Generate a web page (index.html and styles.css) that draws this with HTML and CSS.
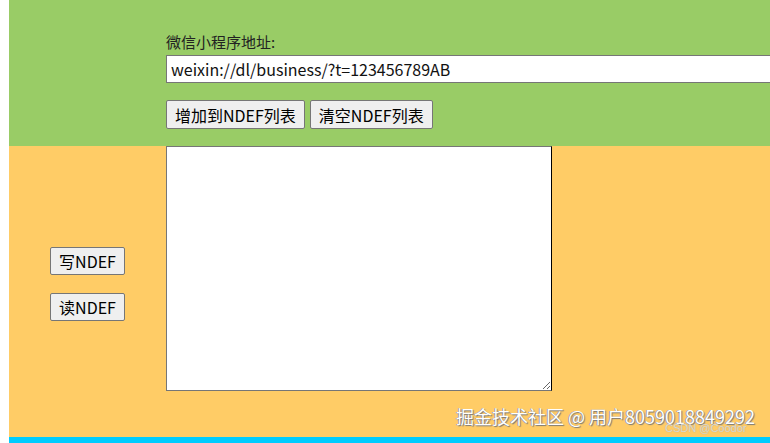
FILE: index.html
```html
<!DOCTYPE html>
<html lang="zh">
<head>
<meta charset="utf-8">
<link rel="stylesheet" href="styles.css">
</head>
<body>
<div class="page">
  <section class="top">
    <div class="side"></div>
    <div class="content">
      <div class="label">微信小程序地址:</div>
      <input class="url" type="text" value="weixin://dl/business/?t=123456789AB">
      <div class="actions">
        <button class="btn">增加到NDEF列表</button>
        <button class="btn">清空NDEF列表</button>
      </div>
    </div>
  </section>
  <section class="main">
    <div class="side side-buttons">
      <button class="btn">写NDEF</button>
      <button class="btn">读NDEF</button>
    </div>
    <div class="content">
      <textarea class="list"></textarea>
    </div>
  </section>
  <div class="bar"></div>
  <div class="watermark">掘金技术社区 @ 用户8059018849292</div>
  <div class="watermark2">CSDN @Coodor</div>
</div>
</body>
</html>
```
FILE: styles.css
```css
html, body {
  margin: 0;
  padding: 0;
  background: #ffffff;
  overflow: hidden;
}
body {
  font-family: "Noto Sans CJK SC", "Noto Sans", sans-serif;
  font-size: 16px;
  color: #000;
}
.page {
  position: relative;
  margin-left: 9px;
  height: 443px;
}
.top {
  display: flex;
  height: 146px;
  background: #99cc66;
}
.side {
  width: 157px;
  flex: none;
}
.content {
  flex: 1;
  min-width: 0;
}
.top .content {
  padding-top: 32px;
}
.label {
  font-size: 15px;
  line-height: 20px;
  color: #222;
  height: 23px;
}
.url {
  display: block;
  box-sizing: border-box;
  width: 640px;
  height: 28px;
  margin: 0;
  padding: 0 4px;
  border: 1px solid #767676;
  background: #fff;
  font-family: "Noto Sans CJK SC", "Noto Sans", sans-serif;
  font-size: 16px;
  color: #111;
}
.actions {
  display: flex;
  gap: 5px;
  margin-top: 17px;
}
.btn {
  box-sizing: border-box;
  height: 29px;
  margin: 0;
  padding: 0 8px;
  border: 1px solid #767676;
  border-radius: 2px;
  background: #efefef;
  font-family: "Noto Sans CJK SC", "Noto Sans", sans-serif;
  font-size: 16px;
  color: #000;
  line-height: 1;
}
.main {
  display: flex;
  height: 291px;
  background: #ffcc66;
}
.side-buttons {
  display: flex;
  flex-direction: column;
  align-items: center;
  gap: 18px;
  padding-top: 101px;
}
.side-buttons .btn {
  width: 75px;
  height: 28px;
  padding: 0;
}
.list {
  display: block;
  box-sizing: border-box;
  width: 386px;
  height: 245px;
  margin: 0;
  border: 1px solid #767676;
  border-right-color: #000;
  background: #fff;
  resize: both;
}
.bar {
  height: 6px;
  background: #00ccff;
}
.watermark {
  position: absolute;
  left: 447px;
  top: 403px;
  font-size: 18px;
  color: #fff;
  text-shadow: 1px 1px 1px #777, -1px 0 0 #999;
  white-space: nowrap;
}
.watermark2 {
  position: absolute;
  left: 656px;
  top: 422px;
  font-family: "Liberation Sans", sans-serif;
  font-size: 11px;
  color: rgba(255,255,255,0.6);
  text-shadow: 0 0 1px #999;
  white-space: nowrap;
}
```
